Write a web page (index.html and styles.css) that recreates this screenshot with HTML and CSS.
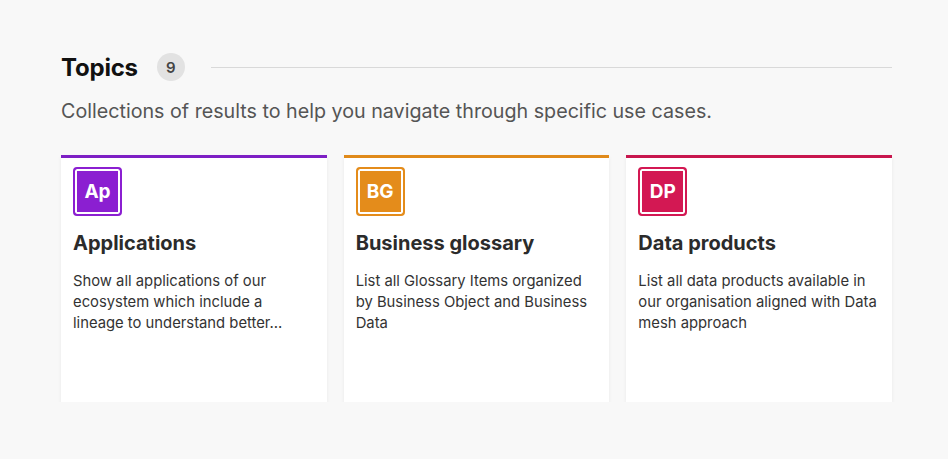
FILE: index.html
```html
<!DOCTYPE html>
<html>
<head>
    <title>Topics</title>
    <link rel="stylesheet" href="styles.css">
</head>
<body>
    <section class="topics">
        <div class="topics-head">
            <h2>Topics</h2>
            <span class="count">9</span>
            <span class="rule"></span>
        </div>
        <p class="intro">Collections of results to help you navigate through specific use cases.</p>

        <div class="cards">
            <div class="card purple">
                <div class="tag">Ap</div>
                <h3>Applications</h3>
                <p>Show all applications of our ecosystem which include a lineage to understand better...</p>
            </div>
            <div class="card orange">
                <div class="tag">BG</div>
                <h3>Business glossary</h3>
                <p>List all Glossary Items organized by Business Object and Business Data</p>
            </div>
            <div class="card red">
                <div class="tag">DP</div>
                <h3>Data products</h3>
                <p>List all data products available in our organisation aligned with Data mesh approach</p>
            </div>
        </div>
    </section>
</body>
</html>
```

FILE: styles.css
```css
body {
    margin: 0;
    background: #f8f8f8;
    font-family: 'Inter', 'Noto Sans', sans-serif;
    color: #333;
}
.topics {
    padding: 51px 56px 0 61px;
}
.topics-head {
    display: flex;
    align-items: center;
    height: 32px;
}
.topics-head h2 {
    margin: 0;
    font-size: 24px;
    font-weight: 700;
    color: #111;
    letter-spacing: -0.2px;
}
.count {
    width: 28px;
    height: 28px;
    margin-left: 19px;
    border-radius: 50%;
    background: #e2e2e2;
    color: #444;
    font-size: 15px;
    font-weight: 600;
    display: flex;
    align-items: center;
    justify-content: center;
}
.rule {
    flex: 1;
    height: 1px;
    margin-left: 26px;
    background: #d9d9d9;
}
.intro {
    margin: 16px 0 0;
    font-size: 19.7px;
    color: #555;
}
.cards {
    display: grid;
    grid-template-columns: repeat(3, 1fr);
    gap: 17px;
    margin-top: 32px;
}
.card {
    box-sizing: border-box;
    background: #fff;
    border-top: 3px solid;
    height: 247px;
    padding: 9px 12px 0;
    box-shadow: 0 2px 4px rgba(0, 0, 0, 0.06);
}
.card.purple { border-color: #7d1fc4; }
.card.orange { border-color: #e08a1a; }
.card.red { border-color: #c8174e; }
.tag {
    width: 49px;
    height: 49px;
    box-sizing: border-box;
    border-radius: 4px;
    border: 2px solid;
    box-shadow: inset 0 0 0 2px #fff;
    color: #fff;
    font-size: 19px;
    font-weight: 700;
    display: flex;
    align-items: center;
    justify-content: center;
}
.purple .tag { background: #8b1fd1; border-color: #8b1fd1; }
.orange .tag { background: #e48c1b; border-color: #e48c1b; }
.red .tag { background: #d31853; border-color: #d31853; }
.card h3 {
    margin: 15px 0 0;
    font-size: 20px;
    font-weight: 700;
    color: #2b2b2b;
}
.card p {
    margin: 16px 0 0;
    font-size: 14.8px;
    line-height: 21px;
    color: #333;
}
```
